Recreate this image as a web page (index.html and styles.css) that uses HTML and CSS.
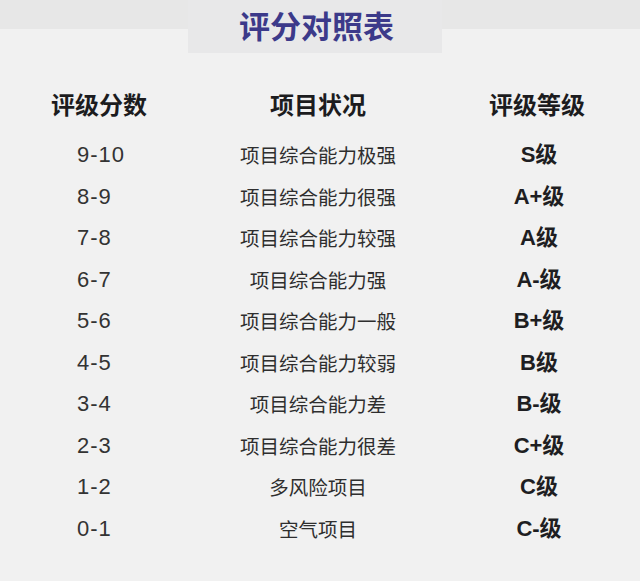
FILE: index.html
```html
<!DOCTYPE html>
<html lang="zh-CN">
<head>
<meta charset="utf-8">
<title>评分对照表</title>
<link rel="stylesheet" href="styles.css">
</head>
<body>
<div class="top">
  <div class="band"></div>
  <div class="tab"><h1 class="title">评分对照表</h1></div>
  <div class="band"></div>
</div>
<div class="table">
  <div class="row head">
    <div class="c1">评级分数</div>
    <div class="c2">项目状况</div>
    <div class="c3">评级等级</div>
  </div>
  <div class="rows">
    <div class="row"><div class="c1 num">9-10</div><div class="c2">项目综合能力极强</div><div class="c3">S级</div></div>
    <div class="row"><div class="c1 num">8-9</div><div class="c2">项目综合能力很强</div><div class="c3">A+级</div></div>
    <div class="row"><div class="c1 num">7-8</div><div class="c2">项目综合能力较强</div><div class="c3">A级</div></div>
    <div class="row"><div class="c1 num">6-7</div><div class="c2">项目综合能力强</div><div class="c3">A-级</div></div>
    <div class="row"><div class="c1 num">5-6</div><div class="c2">项目综合能力一般</div><div class="c3">B+级</div></div>
    <div class="row"><div class="c1 num">4-5</div><div class="c2">项目综合能力较弱</div><div class="c3">B级</div></div>
    <div class="row"><div class="c1 num">3-4</div><div class="c2">项目综合能力差</div><div class="c3">B-级</div></div>
    <div class="row"><div class="c1 num">2-3</div><div class="c2">项目综合能力很差</div><div class="c3">C+级</div></div>
    <div class="row"><div class="c1 num">1-2</div><div class="c2">多风险项目</div><div class="c3">C级</div></div>
    <div class="row"><div class="c1 num">0-1</div><div class="c2">空气项目</div><div class="c3">C-级</div></div>
  </div>
</div>
</body>
</html>
```
FILE: styles.css
```css
html, body {
  margin: 0;
  padding: 0;
  background: #f1f1f1;
}
body {
  width: 640px;
  height: 581px;
  overflow: hidden;
  font-family: "Liberation Sans", "Noto Sans CJK SC", sans-serif;
  color: #333;
}
.top {
  display: grid;
  grid-template-columns: 188px 254px 1fr;
  height: 53px;
}
.band {
  height: 29px;
  background: #e7e7e7;
}
.tab {
  background: #e8e8e9;
  display: flex;
  justify-content: center;
}
.title {
  margin: 0;
  font-family: "Noto Sans CJK SC", sans-serif;
  font-weight: 700;
  font-size: 31px;
  line-height: 50px;
  color: #3c3a8a;
  padding-left: 3px;
}
.table {
  padding-top: 30px;
}
.row {
  display: grid;
  grid-template-columns: 198px 240px 1fr;
  height: 41.5px;
  line-height: 41.5px;
  white-space: nowrap;
}
.head {
  height: 42px;
  line-height: 42px;
  margin-bottom: 9px;
  font-family: "Noto Sans CJK SC", sans-serif;
  font-weight: 700;
  font-size: 24px;
  color: #1c1c1e;
}
.head .c1, .head .c2, .head .c3 {
  text-align: center;
}
.head .c3 {
  padding-right: 4px;
}
.c1.num {
  padding-left: 77px;
  font-family: "Liberation Sans", sans-serif;
  font-size: 22px;
  letter-spacing: 1px;
  color: #333;
}
.rows .c2 {
  text-align: center;
  font-family: "Noto Sans CJK SC", sans-serif;
  font-size: 19.5px;
  color: #2e2e2e;
}
.rows .c3 {
  text-align: center;
  font-weight: 700;
  font-size: 22px;
  color: #1e1e22;
}
```
